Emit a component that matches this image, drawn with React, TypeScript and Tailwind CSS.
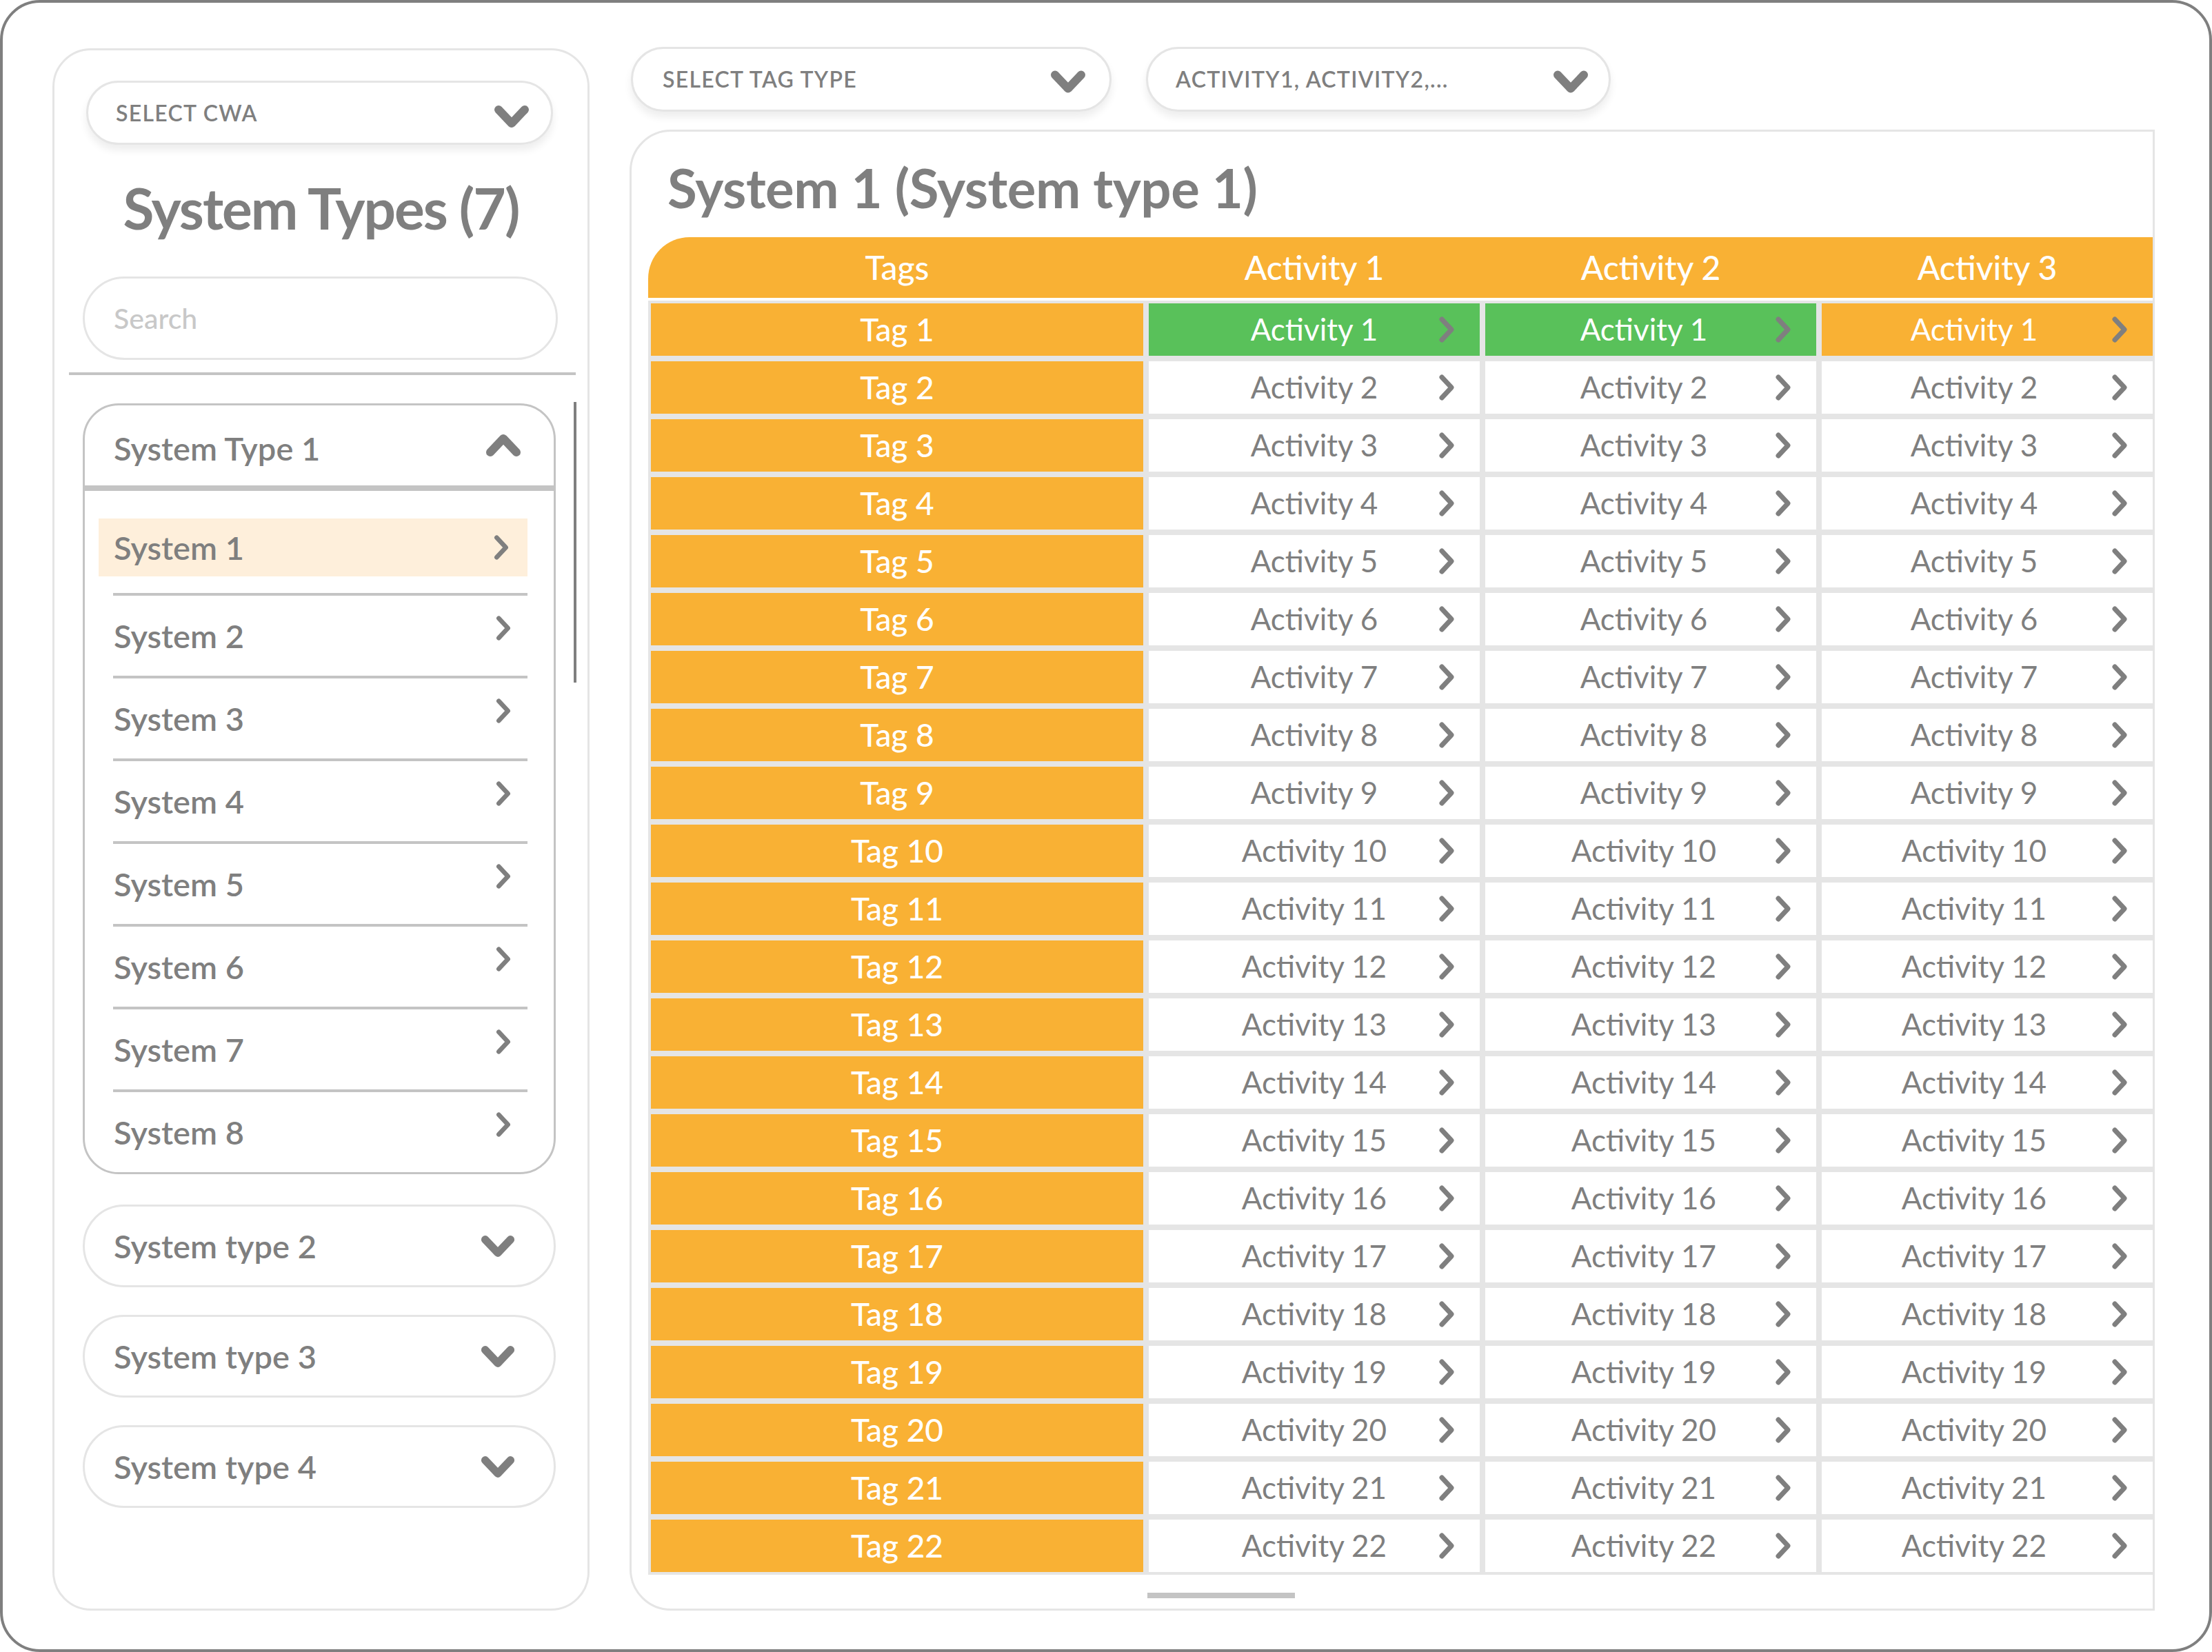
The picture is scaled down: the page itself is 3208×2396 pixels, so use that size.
import React from 'react'

const GRAY = '#7f7f7f'

function ChevronDown({ className }: { className?: string }) {
  return (
    <svg viewBox="0 0 54 36" className={className} fill="none" stroke={GRAY} strokeWidth={12} strokeLinecap="round" strokeLinejoin="round">
      <polyline points="8,8 27,28 46,8" />
    </svg>
  )
}

function ChevronUp({ className }: { className?: string }) {
  return (
    <svg viewBox="0 0 54 36" className={className} fill="none" stroke={GRAY} strokeWidth={12} strokeLinecap="round" strokeLinejoin="round">
      <polyline points="8,28 27,8 46,28" />
    </svg>
  )
}

function ChevronRight({ className }: { className?: string }) {
  return (
    <svg viewBox="0 0 24 40" className={className} fill="none" stroke={GRAY} strokeWidth={7} strokeLinecap="round" strokeLinejoin="round">
      <polyline points="5,5 19,20 5,35" />
    </svg>
  )
}

const systems = ['System 1', 'System 2', 'System 3', 'System 4', 'System 5', 'System 6', 'System 7', 'System 8']
const collapsed = ['System type 2', 'System type 3', 'System type 4']
const rows = Array.from({ length: 22 }, (_, i) => i + 1)
// text in the activity columns drifts left a bit per column
const colPad = ['pl-[60px]', 'pl-[40px]', 'pl-[22px]']

function Sidebar() {
  return (
    <div className="relative w-[779px] shrink-0 rounded-[56px] border-[3px] border-[#e5e5e5] flex flex-col">
      <div className="ml-[46px] mt-[44px] w-[677px] h-[93px] rounded-full border-[3px] border-[#e5e5e5] shadow-[0_8px_12px_rgba(0,0,0,0.07)] flex items-center justify-between pl-[40px] pr-[30px]">
        <span className="text-[32px] font-semibold tracking-[1.3px] leading-none">SELECT CWA</span>
        <ChevronDown className="w-[54px] h-[36px] mt-[10px]" />
      </div>

      <h1 className="mt-[42px] text-center text-[82px] font-bold leading-[1.2] tracking-[-2px]">System Types (7)</h1>

      <div className="ml-[41px] mt-[51px] w-[689px] h-[121px] rounded-full border-[3px] border-[#e5e5e5] flex items-center pl-[42px]">
        <span className="text-[41px] font-medium text-[#c8c8c8]">Search</span>
      </div>

      <div className="ml-[21px] mt-[18px] w-[735px] h-[4px] bg-[#c4c4c4]" />

      <div className="ml-[41px] mt-[41px] w-[686px] rounded-[52px] border-[3px] border-[#c4c4c4] overflow-hidden">
        <div className="h-[116px] flex items-center justify-between pl-[42px] pr-[46px]">
          <span className="text-[47px] font-semibold leading-[1.2] mt-[8px]">System Type 1</span>
          <ChevronUp className="w-[54px] h-[36px]" />
        </div>
        <div className="h-[8px] bg-[#c4c4c4]" />
        <div className="mt-[40px] ml-[20px] w-[622px] h-[84px] bg-[#feefdb] flex items-center justify-between pl-[22px] pr-[26px]">
          <span className="text-[47px] font-semibold leading-[1.2]">{systems[0]}</span>
          <ChevronRight className="w-[24px] h-[38px]" />
        </div>
        {systems.slice(1).map((s, i) => (
          <div key={s} className={i === 0 ? 'mt-[24px]' : ''}>
            <div className="ml-[41px] w-[601px] h-[4px] bg-[#c4c4c4]" />
            <div className="h-[116px] flex items-center justify-between pl-[42px] pr-[61px]">
              <span className="text-[47px] font-semibold leading-[1.2]">{s}</span>
              <ChevronRight className="w-[24px] h-[38px] -mt-[22px]" />
            </div>
          </div>
        ))}
      </div>

      {collapsed.map((c, i) => (
        <div
          key={c}
          className={`ml-[41px] w-[686px] h-[120px] rounded-full border-[3px] border-[#e5e5e5] flex items-center justify-between pl-[42px] pr-[55px] ${i === 0 ? 'mt-[44px]' : 'mt-[40px]'}`}
        >
          <span className="text-[47px] font-semibold leading-[1.2]">{c}</span>
          <ChevronDown className="w-[52px] h-[35px]" />
        </div>
      ))}

      {/* scrollbar */}
      <div className="absolute left-[753px] top-[510px] w-[4px] h-[407px] bg-[#7f7f7f]" />
    </div>
  )
}

function Table() {
  return (
    <div className="ml-[24px]">
      <div className="h-[88px] rounded-tl-[60px] bg-[#f9b134] grid grid-cols-[714px_1fr_1fr_1fr] gap-x-[8px] pl-[4px] items-center text-white text-[48px] font-medium leading-[1.2]">
        <div className="text-center">Tags</div>
        <div className="text-center">Activity 1</div>
        <div className="text-center">Activity 2</div>
        <div className="text-center">Activity 3</div>
      </div>
      <div className="mt-[4px] bg-[#e5e5e5] pt-[4px] pb-[4px] pl-[4px] grid grid-cols-[714px_1fr_1fr_1fr] gap-[8px]">
        {rows.map((n) => {
          const first = n === 1
          const fills = first ? ['bg-[#59c15a]', 'bg-[#59c15a]', 'bg-[#f9b134]'] : ['bg-white', 'bg-white', 'bg-white']
          return (
            <React.Fragment key={n}>
              <div className="h-[76px] bg-[#f9b134] flex items-center justify-center text-white text-[46px] font-medium leading-[1.2]">
                Tag {n}
              </div>
              {[0, 1, 2].map((c) => (
                <div key={c} className={`h-[76px] flex items-center pr-[36px] ${fills[c]} ${colPad[c]}`}>
                  <span className={`flex-1 text-center text-[44px] leading-[1.2] ${first ? 'text-white' : ''}`}>
                    Activity {first ? 1 : n}
                  </span>
                  <ChevronRight className="w-[24px] h-[40px]" />
                </div>
              ))}
            </React.Fragment>
          )
        })}
      </div>
    </div>
  )
}

function Main() {
  return (
    <div className="flex-1 flex flex-col -mt-[2px]">
      <div className="flex gap-[50px] ml-[2px]">
        <div className="w-[697px] h-[94px] rounded-full border-[3px] border-[#e5e5e5] shadow-[0_8px_12px_rgba(0,0,0,0.07)] flex items-center justify-between pl-[43px] pr-[33px]">
          <span className="text-[32px] font-semibold tracking-[1.3px] leading-none">SELECT TAG TYPE</span>
          <ChevronDown className="w-[54px] h-[37px] mt-[6px]" />
        </div>
        <div className="w-[674px] h-[94px] rounded-full border-[3px] border-[#e5e5e5] shadow-[0_8px_12px_rgba(0,0,0,0.07)] flex items-center justify-between pl-[40px] pr-[28px]">
          <span className="text-[32px] font-semibold tracking-[1.3px] leading-none">ACTIVITY1, ACTIVITY2,...</span>
          <ChevronDown className="w-[54px] h-[37px] mt-[6px]" />
        </div>
      </div>

      <div className="mt-[26px] flex-1 rounded-l-[60px] border-[3px] border-[#e5e5e5] flex flex-col">
        <h2 className="mt-[35px] ml-[52px] text-[78px] font-bold leading-[1.2] tracking-[-0.5px]">System 1 (System type 1)</h2>
        <div className="mt-[24px]">
          <Table />
        </div>
        <div className="mt-[26px] ml-[748px] w-[214px] h-[8px] bg-[#c4c4c4]" />
      </div>
    </div>
  )
}

export default function App() {
  return (
    <div className="w-[3208px] h-[2396px] bg-white font-[Lato,sans-serif] text-[#7f7f7f]">
      <div className="w-full h-full rounded-[58px] border-4 border-[#7f7f7f] flex gap-[58px] pl-[72px] pr-[79px] pt-[66px] pb-[56px]">
        <Sidebar />
        <Main />
      </div>
    </div>
  )
}
